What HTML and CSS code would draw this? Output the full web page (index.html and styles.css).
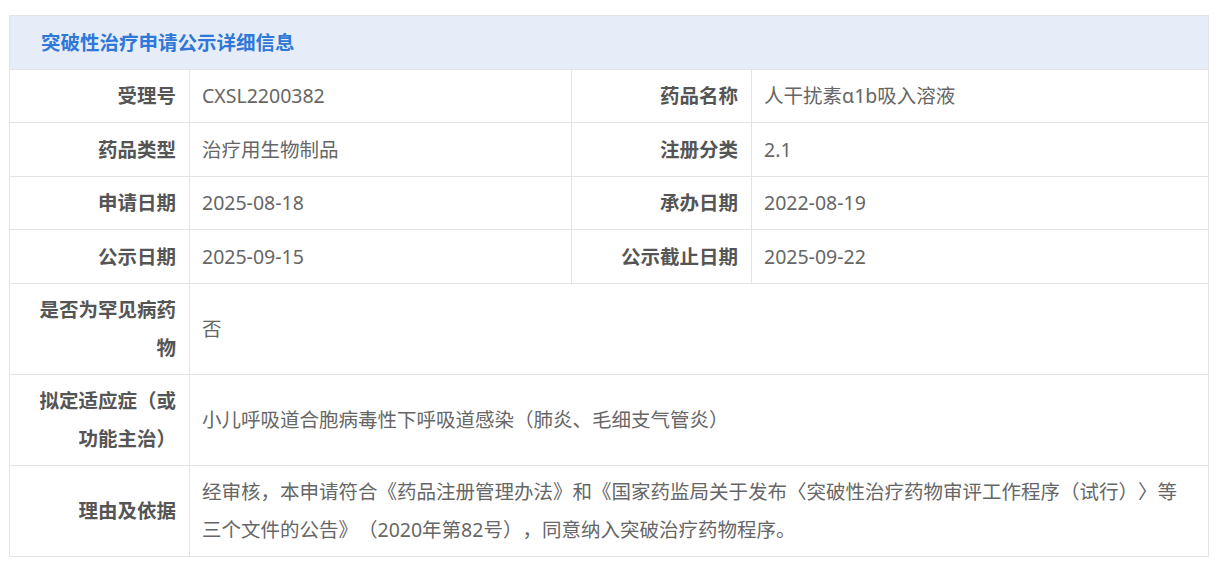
FILE: index.html
```html
<!DOCTYPE html>
<html lang="zh-CN">
<head>
    <meta charset="UTF-8">
    <title>突破性治疗申请公示详细信息</title>
    <link rel="stylesheet" href="styles.css">
</head>
<body>
    <div class="detail">
        <table class="info">
            <colgroup>
                <col class="c-label">
                <col class="c-value">
                <col class="c-label">
                <col class="c-value2">
            </colgroup>
            <tr>
                <th class="title" colspan="4">突破性治疗申请公示详细信息</th>
            </tr>
            <tr>
                <td class="label">受理号</td>
                <td class="value">CXSL2200382</td>
                <td class="label">药品名称</td>
                <td class="value">人干扰素α1b吸入溶液</td>
            </tr>
            <tr>
                <td class="label">药品类型</td>
                <td class="value">治疗用生物制品</td>
                <td class="label">注册分类</td>
                <td class="value">2.1</td>
            </tr>
            <tr>
                <td class="label">申请日期</td>
                <td class="value">2025-08-18</td>
                <td class="label">承办日期</td>
                <td class="value">2022-08-19</td>
            </tr>
            <tr>
                <td class="label">公示日期</td>
                <td class="value">2025-09-15</td>
                <td class="label">公示截止日期</td>
                <td class="value">2025-09-22</td>
            </tr>
            <tr>
                <td class="label">是否为罕见病药物</td>
                <td class="value" colspan="3">否</td>
            </tr>
            <tr>
                <td class="label">拟定适应症（或功能主治）</td>
                <td class="value" colspan="3">小儿呼吸道合胞病毒性下呼吸道感染（肺炎、毛细支气管炎）</td>
            </tr>
            <tr>
                <td class="label">理由及依据</td>
                <td class="value" colspan="3">经审核，本申请符合《药品注册管理办法》和《国家药监局关于发布〈突破性治疗药物审评工作程序（试行）〉等三个文件的公告》（2020年第82号），同意纳入突破治疗药物程序。</td>
            </tr>
        </table>
    </div>
</body>
</html>
```

FILE: styles.css
```css
body {
    margin: 0;
    background-color: #fff;
    font-family: "Noto Sans", "Noto Sans CJK SC", sans-serif;
    font-size: 19.5px;
    text-spacing-trim: space-all;
}

.detail {
    padding: 15px 0 0 9px;
}

.info {
    width: 1199px;
    border-collapse: collapse;
    table-layout: fixed;
}

.c-label {
    width: 180px;
}

.c-value {
    width: 382px;
}

.c-value2 {
    width: 457px;
}

.info th,
.info td {
    border: 1px solid #e4e4e4;
    line-height: 37.5px;
    padding: 7.5px 12px;
    vertical-align: middle;
}

.title {
    background-color: #e6edf8;
    color: #2f78d8;
    font-weight: bold;
    text-align: left;
    padding-left: 31px !important;
}

.label {
    color: #555;
    font-weight: bold;
    text-align: right;
    padding-right: 13px !important;
}

.value {
    color: #666;
    text-align: left;
}
```
